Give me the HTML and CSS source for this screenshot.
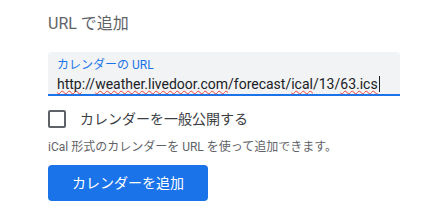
FILE: index.html
```html
<!DOCTYPE html>
<html lang="ja">
<head>
<meta charset="utf-8">
<link rel="stylesheet" href="styles.css">
</head>
<body>
<div class="page">
  <h2 class="title">URL で追加</h2>
  <div class="field">
    <div class="field-label">カレンダーの URL</div>
    <div class="field-value"><span class="sp">http</span>://<span class="sp">weather.livedoor.com</span>/forecast/<span class="sp">ical</span>/13/<span class="sp">63.ics</span><span class="caret"></span></div>
  </div>
  <label class="check-row">
    <span class="checkbox"></span>
    <span class="check-label">カレンダーを一般公開する</span>
  </label>
  <p class="help">iCal 形式のカレンダーを URL を使って追加できます。</p>
  <button class="btn">カレンダーを追加</button>
</div>
</body>
</html>
```

FILE: styles.css
```css
html, body {
  margin: 0;
  padding: 0;
  background: #fff;
}
body {
  font-family: Roboto, "Noto Sans CJK JP", sans-serif;
}
.page {
  padding: 12px 25px 0 48px;
  display: flex;
  flex-direction: column;
  align-items: flex-start;
}
.title {
  margin: 0;
  font-size: 16px;
  font-weight: 400;
  line-height: 24px;
  color: #5f6368;
}
.field {
  margin-top: 16px;
  align-self: stretch;
  background: #f1f3f4;
  border-radius: 4px 4px 0 0;
  border-bottom: 2px solid #1a73e8;
  padding: 5px 9px 4px 9px;
  height: 33px;
}
.field-label {
  font-size: 12px;
  line-height: 16px;
  color: #1a73e8;
}
.field-value {
  font-size: 14px;
  line-height: 20px;
  color: #202124;
  white-space: nowrap;
  display: flex;
  align-items: center;
  padding-top: 1px;
}
.sp {
  text-decoration-line: underline;
  text-decoration-style: wavy;
  text-decoration-color: #e8453c;
  text-decoration-thickness: 1px;
  text-underline-offset: 1px;
  text-decoration-skip-ink: none;
}
.caret {
  display: inline-block;
  width: 1px;
  height: 16px;
  background: #202124;
  margin-left: 1px;
}
.check-row {
  margin-top: 13px;
  display: flex;
  align-items: center;
  gap: 14px;
}
.checkbox {
  width: 14px;
  height: 14px;
  border: 2px solid #5f6368;
  border-radius: 2px;
}
.check-label {
  font-size: 14px;
  line-height: 20px;
  color: #3c4043;
}
.help {
  margin: 10px 0 0 0;
  font-size: 12px;
  line-height: 16px;
  color: #5f6368;
}
.btn {
  margin-top: 10px;
  height: 36px;
  padding: 0 24px;
  border: none;
  border-radius: 4px;
  background: #1a73e8;
  color: #fff;
  font-family: Roboto, "Noto Sans CJK JP", sans-serif;
  font-size: 14px;
  line-height: 36px;
}
```
